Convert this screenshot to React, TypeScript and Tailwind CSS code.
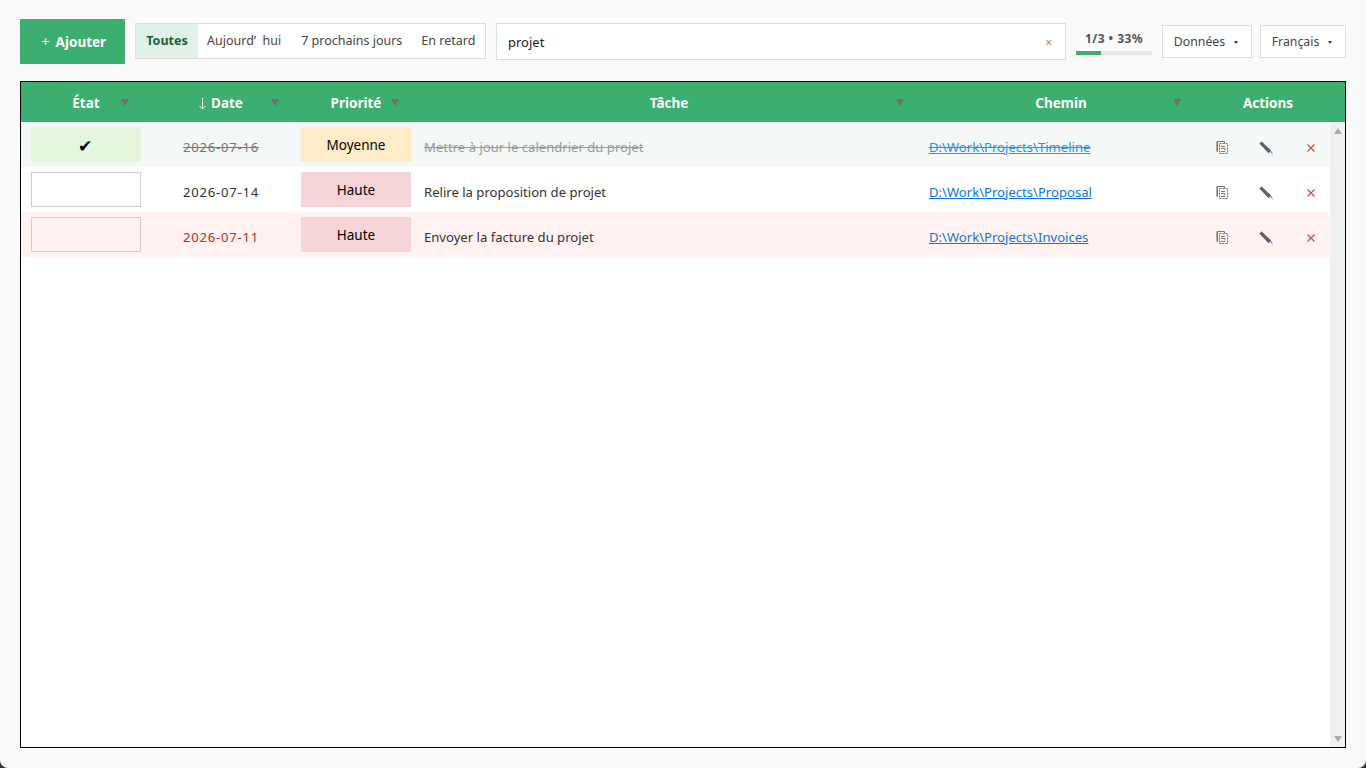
import { ReactNode } from "react";

type Row = {
  done?: boolean;
  late?: boolean;
  date: string;
  priority: string;
  task: string;
  path: string;
};

const rows: Row[] = [
  { done: true, date: "2026-07-16", priority: "Moyenne", task: "Mettre à jour le calendrier du projet", path: "D:\\Work\\Projects\\Timeline" },
  { date: "2026-07-14", priority: "Haute", task: "Relire la proposition de projet", path: "D:\\Work\\Projects\\Proposal" },
  { late: true, date: "2026-07-11", priority: "Haute", task: "Envoyer la facture du projet", path: "D:\\Work\\Projects\\Invoices" },
];

const gridCols = "grid grid-cols-[130px_140px_130px_496px_288px_1fr]";

function SortArrow({ className }: { className: string }) {
  return <span className={`absolute top-[17px] h-0 w-0 border-x-[4px] border-t-[7px] border-x-transparent border-t-[#6f6f6f] ${className}`} />;
}

function HeaderCell({ children, arrow, className = "" }: { children: ReactNode; arrow?: string; className?: string }) {
  return (
    <div className={`relative flex items-center justify-center pt-[3px] text-[13.5px] font-bold text-white ${className}`}>
      {children}
      {arrow && <SortArrow className={arrow} />}
    </div>
  );
}

function DownArrow() {
  return (
    <svg width="7" height="12" viewBox="0 0 7 12" fill="none" stroke="#ffffff" strokeWidth="1" className="mr-[5px]">
      <path d="M3.5 0v11M.5 8l3 3 3-3" />
    </svg>
  );
}

function CopyIcon() {
  return (
    <svg width="12" height="13" viewBox="0 0 12 13" fill="none" stroke="#6f737a" strokeWidth="1">
      <path d="M1.5 10.5V.5h7v2" />
      <path d="M.5.5v10h1" stroke="#c2a88c" />
      <path d="M3.5 2.5h8v10h-8z" strokeDasharray="2 1" />
      <path d="M5 5.5h4M5 7.5h4M9 7.5v2M5 10.5h4" stroke="#7f7c72" />
    </svg>
  );
}

function PencilIcon() {
  return (
    <svg width="14" height="14" viewBox="0 0 14 14">
      <path d="M2.6.4 12.2 9.6 9.6 12.2.4 2.6z" fill="#5b5f66" />
      <path d="M.4 2.6 2.6.4" stroke="#d0a67e" strokeWidth="1" />
      <path d="m11 11 3 3-1.2-4z" fill="#6fa6d8" />
    </svg>
  );
}

function CrossIcon() {
  return (
    <svg width="8" height="8" viewBox="0 0 8 8" stroke="#cf4a3f" strokeWidth="1.2">
      <path d="m.5.5 7 7M7.5.5l-7 7" />
    </svg>
  );
}

function TaskRow({ row }: { row: Row }) {
  const bg = row.done ? "bg-[#f4f9f7]" : row.late ? "bg-[#fff2f0]" : "bg-white";
  const dateColor = row.done ? "text-[#777777] line-through" : row.late ? "text-[#c62828]" : "text-[#333333]";
  const pillBg = row.priority === "Moyenne" ? "bg-[#ffecc9]" : "bg-[#f5d5d7]";

  return (
    <div className={`${gridCols} mr-[1px] h-[45px] text-[13.1px] ${bg}`}>
      <div className="px-[10px] pt-[5px]">
        {row.done ? (
          <div className="flex h-[35px] items-center justify-center bg-[#e6f6de] pr-[2px] pt-[2px] text-[17px] text-black">✔</div>
        ) : (
          <div className="h-[35px] border border-[#cfcfcf]" />
        )}
      </div>
      <div className={`flex items-center justify-center pt-[6px] tracking-[0.75px] ${dateColor}`}>{row.date}</div>
      <div className="px-[10px] pt-[5px]">
        <div className={`flex h-[35px] items-center justify-center pt-[1px] text-[13.5px] text-black ${pillBg}`}>{row.priority}</div>
      </div>
      <div className={`flex items-center pl-[3px] pt-[6px] ${row.done ? "text-[#9a9a9a] line-through" : "text-[#333333]"}`}>{row.task}</div>
      <div className="flex items-center pl-[12px] pt-[6px]">
        <span className={row.done ? "text-[#2a90f0] [text-decoration-line:underline_line-through]" : "text-[#0a78dc] underline"}>{row.path}</span>
      </div>
      <div className="flex items-center pl-[11px] pr-[14px] pt-[5px]">
        <span className="flex w-[12px] justify-center"><CopyIcon /></span>
        <span className="ml-[31px] flex w-[14px] justify-center pt-[1px]"><PencilIcon /></span>
        <span className="ml-[34px] flex w-[8px] justify-center pt-[2px]"><CrossIcon /></span>
      </div>
    </div>
  );
}

export default function App() {
  return (
    <div className="h-screen overflow-hidden bg-[#333333] font-['Noto_Sans','Open_Sans',sans-serif]">
      <div className="flex h-full flex-col rounded-b-[8px] bg-[#fafafa] px-[20px] pb-[20px] pt-[19px]">
        <div className="flex h-[45px] items-center">
          <button className="flex h-[45px] w-[105px] items-center justify-center gap-[6px] bg-[#3cae6f] pl-[3px] pt-[2px] text-[13.5px] font-bold text-white">
            <span className="font-normal">+</span> Ajouter
          </button>

          <div className="ml-[10px] mb-[2px] flex h-[36px] w-[351px] items-center border border-[#d8dfdd] bg-white text-[12.5px] text-[#444444]">
            <span className="flex h-full w-[62px] items-center justify-center bg-[#e0f2e8] pt-[2px] font-bold text-[#17603a]">Toutes</span>
            <span className="ml-[9px] pt-[2px]">Aujourd’&nbsp;&nbsp;hui</span>
            <span className="ml-[20px] pt-[2px]">7 prochains jours</span>
            <span className="ml-[19px] pt-[2px]">En retard</span>
          </div>

          <div className="ml-[10px] mb-[1px] flex h-[37px] w-[570px] items-center justify-between border border-[#d8dfdd] bg-white pl-[11px] pr-[13px] pt-[3px] text-[13px] text-[#222222]">
            <span>projet</span>
            <span className="text-[12px] text-[#b08a60]">×</span>
          </div>

          <div className="ml-[10px] w-[76px] pt-[3px]">
            <div className="text-center text-[12px] font-bold leading-[16px] tracking-[0.45px] text-[#555555]">1/3 • 33%</div>
            <div className="mt-[4px] h-[4px] bg-[#e2e8e5]">
              <div className="h-full bg-[#3cae6f]" style={{ width: "33%" }} />
            </div>
          </div>

          <div className="ml-[10px] flex h-[33px] w-[90px] items-center justify-center gap-[9px] border border-[#d8dfdd] bg-white pt-[2px] pr-[2px] text-[12.3px] text-[#444444]">
            Données <span className="h-0 w-0 border-x-[2px] border-t-[3px] border-x-transparent border-t-[#333333]" />
          </div>

          <div className="ml-[8px] flex h-[33px] w-[86px] items-center justify-center gap-[9px] border border-[#d8dfdd] bg-white pt-[2px] pr-[2px] text-[12.3px] text-[#444444]">
            Français <span className="h-0 w-0 border-x-[2px] border-t-[3px] border-x-transparent border-t-[#333333]" />
          </div>
        </div>

        <div className="mt-[17px] flex min-h-0 flex-1 flex-col border border-black bg-white">
          <div className={`${gridCols} h-[40px] bg-[#3cae6f]`}>
            <HeaderCell arrow="right-[22px]">État</HeaderCell>
            <HeaderCell arrow="right-[12px]"><DownArrow />Date</HeaderCell>
            <HeaderCell arrow="right-[22px]">Priorité</HeaderCell>
            <HeaderCell arrow="right-[13px]">Tâche</HeaderCell>
            <HeaderCell arrow="right-[24px]">Chemin</HeaderCell>
            <HeaderCell className="pr-[14px]">Actions</HeaderCell>
          </div>
          <div className="flex min-h-0 flex-1">
            <div className="min-w-0 flex-1">
              {rows.map((row) => (
                <TaskRow key={row.date} row={row} />
              ))}
            </div>
            <div className="flex w-[15px] flex-col items-center justify-between bg-[#f0f0f0] pb-[5px] pt-[6px]">
              <span className="h-0 w-0 border-x-[4px] border-b-[6px] border-x-transparent border-b-[#a8a8a8]" />
              <span className="h-0 w-0 border-x-[4px] border-t-[6px] border-x-transparent border-t-[#a8a8a8]" />
            </div>
          </div>
        </div>
      </div>
    </div>
  );
}
